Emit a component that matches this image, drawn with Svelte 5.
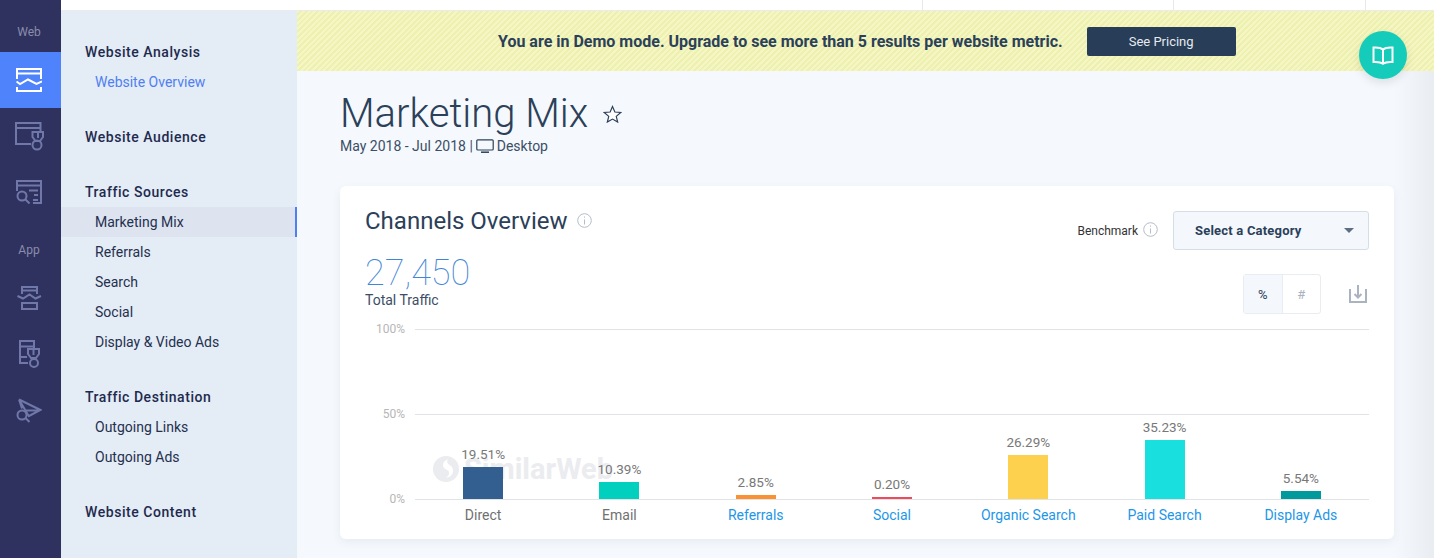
<script>
  const groups = [
    { title: 'Website Analysis', items: [{ label: 'Website Overview', link: true }] },
    { title: 'Website Audience', items: [] },
    { title: 'Traffic Sources', items: [{ label: 'Marketing Mix', active: true }, { label: 'Referrals' }, { label: 'Search' }, { label: 'Social' }, { label: 'Display & Video Ads' }] },
    { title: 'Traffic Destination', items: [{ label: 'Outgoing Links' }, { label: 'Outgoing Ads' }] },
    { title: 'Website Content', items: [] }
  ];
  const bars = [
    { name: 'Direct', value: '19.51%', h: 32, color: '#325f8f' },
    { name: 'Email', value: '10.39%', h: 17, color: '#00d0bd' },
    { name: 'Referrals', value: '2.85%', h: 4, color: '#fa9133', link: true },
    { name: 'Social', value: '0.20%', h: 2, color: '#ef4a5c', link: true },
    { name: 'Organic Search', value: '26.29%', h: 44, color: '#fdd04d', link: true },
    { name: 'Paid Search', value: '35.23%', h: 59, color: '#1adfdf', link: true },
    { name: 'Display Ads', value: '5.54%', h: 8, color: '#009a9c', link: true }
  ];
</script>

<div class="page">
  <aside class="rail">
    <div class="rail-label web">Web</div>
    <div class="rail-item on">
      <svg width="26" height="24" viewBox="0 0 26 24" fill="none" stroke="#fff" stroke-width="2"><path d="M1 11V1h24v10M1 5.500h24M.5 13.500 4 16l8-4.500 8.500 4.500 5.500-2.500M1 19v4h24v-4M5 23h16"/></svg>
    </div>
    <div class="rail-item">
      <svg width="29" height="29" viewBox="0 0 29 29" fill="none" stroke="#6f78a8" stroke-width="2"><path d="M16 22H1V1h24.500v8M1 6h24.500"/><path d="M17.500 10H28v5l-3 4h-4.500l-3-4zM23 10v6"/><circle cx="22" cy="23" r="4.500"/></svg>
    </div>
    <div class="rail-item">
      <svg width="26" height="25" viewBox="0 0 26 25" fill="none" stroke="#6f78a8" stroke-width="2"><path d="M1 11V1h24v22h-8M1 5.500h24M13 10.500h9M18 15h4M17 20h5"/><circle cx="6" cy="16" r="4.500"/><path d="m9.500 19.500 4 4"/></svg>
    </div>
    <div class="rail-label app">App</div>
    <div class="rail-item first">
      <svg width="25" height="24" viewBox="0 0 25 24" fill="none" stroke="#6f78a8" stroke-width="2"><path d="M5 8V1h15v7M5 4.500h15M.5 10l5.500 2.500 6.500-4 6 4 5.500-2.500M5 17h15v6H5z"/></svg>
    </div>
    <div class="rail-item">
      <svg width="21" height="28" viewBox="0 0 21 28" fill="none" stroke="#6f78a8" stroke-width="2"><path d="M9 23H1V1h14v7M1 6.500h14M1 17h7"/><path d="M9 9h11v5l-3 4h-5l-3-4zM14.500 9v6"/><circle cx="15" cy="23" r="4"/></svg>
    </div>
    <div class="rail-item">
      <svg width="26" height="25" viewBox="0 0 26 25" fill="none" stroke="#6f78a8" stroke-width="2"><path d="M3 1.500 24.500 12 12 18.500M3 1.500l3 9M3 1.500l10 17M9 12.500h15"/><circle cx="6" cy="17" r="4.500"/><path d="m9.500 20 4 4"/></svg>
    </div>
  </aside>

  <div class="right">
    <div class="topbar">
      <span class="tick t1"></span><span class="tick t2"></span><span class="tick t3"></span>
    </div>
    <div class="body">
      <nav class="nav">
        {#each groups as g}
          <section class="group">
            <h3>{g.title}</h3>
            {#each g.items as it}
              <div class="item" class:active={it.active} class:link={it.link}>{it.label}</div>
            {/each}
          </section>
        {/each}
      </nav>

      <main class="main">
        <div class="banner">
          <strong>You are in Demo mode. Upgrade to see more than 5 results per website metric.</strong>
          <button class="pricing">See Pricing</button>
        </div>
        <div class="fab">
          <svg width="22" height="19" viewBox="0 0 22 19" fill="none" stroke="#fff" stroke-width="2"><path d="M11 3.500C9 1.800 5.500 1.200 1.500 1.500V16c4-.3 7.500.2 9.500 1.800 2-1.600 5.500-2.100 9.500-1.800V1.500C16.500 1.200 13 1.800 11 3.500zM11 3.500v14"/></svg>
        </div>
        <div class="edge"></div>

        <div class="content">
          <div class="head">
            <h1>Marketing Mix</h1>
            <svg class="star" width="19" height="18" viewBox="0 0 24 23" fill="#fff" stroke="#2b4059" stroke-width="1.500"><path d="M12 2l3 7 7.500.6-5.700 4.900 1.800 7.300L12 18l-6.600 3.800 1.800-7.300L1.500 9.600 9 9z"/></svg>
          </div>
          <div class="sub">May 2018 - Jul 2018 | <svg class="desk" width="18" height="14" viewBox="0 0 18 14" fill="none" stroke="#2b4059" stroke-width="1.200"><rect x=".8" y=".8" width="16.400" height="10.200" rx="1"/><path d="M5 13.200h8" stroke-width="1.500"/></svg> Desktop</div>

          <section class="card">
            <div class="card-top">
              <div>
                <div class="ctitle">Channels Overview <svg class="info" width="15" height="15" viewBox="0 0 15 15" fill="none" stroke="#b4bdc9"><circle cx="7.500" cy="7.500" r="6.800"/><path d="M7.500 6.500V11.500M7.500 3.500v1.200"/></svg></div>
                <div class="total">27,450</div>
                <div class="total-label">Total Traffic</div>
              </div>
              <div class="tools">
                <div class="bench">
                  <span>Benchmark</span>
                  <svg width="15" height="15" viewBox="0 0 15 15" fill="none" stroke="#b4bdc9"><circle cx="7.500" cy="7.500" r="6.800"/><path d="M7.500 6.500V11.500M7.500 3.500v1.200"/></svg>
                  <div class="select"><span>Select a Category</span><i class="caret"></i></div>
                </div>
                <div class="actions">
                  <div class="toggle"><span class="sel">%</span><span>#</span></div>
                  <svg width="18" height="18" viewBox="0 0 18 18" fill="none" stroke="#aab4c1" stroke-width="2"><path d="M1 4v13h16V4"/><path d="M9 0v12M5.500 9 9 12.500 12.500 9"/></svg>
                </div>
              </div>
            </div>

            <div class="chart">
              <div class="row"><span class="tick-label">100%</span><div class="line"></div></div>
              <div class="row"><span class="tick-label">50%</span><div class="line"></div></div>
              <div class="row zero"><span class="tick-label">0%</span><div class="line"></div></div>
              <div class="mark">
                <svg width="26" height="26" viewBox="0 0 26 26"><circle cx="13" cy="13" r="13" fill="#ebecef"/><path d="M15 3C8 6 9 12 14 14c3 1 3 5-1 8 7-1 9-8 5-12-3-2-5-4-3-7z" fill="#fff"/></svg>
                <span>SimilarWeb</span>
              </div>
              <div class="plot">
                {#each bars as b}
                  <div class="col">
                    <span class="val">{b.value}</span>
                    <div class="bar" style="height:{b.h}px;background:{b.color}"></div>
                  </div>
                {/each}
              </div>
            </div>
            <div class="cats">
              {#each bars as b}
                <span class:clink={b.link}>{b.name}</span>
              {/each}
            </div>
          </section>
        </div>
      </main>
    </div>
  </div>
</div>

<style>
  :global(body) { margin: 0; }
  .page { display: flex; width: 1434px; height: 558px; overflow: hidden; font-family: Roboto, "Liberation Sans", sans-serif; color: #2b4059; }

  .rail { width: 61px; flex: none; background: #2f325f; display: flex; flex-direction: column; align-items: stretch; }
  .rail-label { text-align: center; font-size: 12px; line-height: 16px; color: #8a8dab; padding-right: 3px; }
  .rail-label.web { padding-top: 24px; height: 28px; }
  .rail-label.app { padding-top: 22px; height: 16px; margin-bottom: 12px; }
  .rail-item { height: 56px; flex: none; display: flex; align-items: center; justify-content: center; padding-right: 3px; }
  .rail-item.on { background: #4f83fb; }

  .right { flex: 1; min-width: 0; display: flex; flex-direction: column; }
  .topbar { height: 10px; flex: none; background: #fff; border-bottom: 1px solid #e9ecef; position: relative; }
  .tick { position: absolute; top: 0; bottom: 0; width: 1px; background: #e6e8ec; }
  .t1 { left: 861px; } .t2 { left: 1112px; } .t3 { left: 1304px; }
  .body { flex: 1; min-height: 0; display: flex; }

  .nav { width: 236px; flex: none; background: #e4ecf5; padding-top: 26px; box-sizing: border-box; }
  .group { margin-bottom: 25px; }
  h3 { margin: 0; padding-left: 24px; height: 30px; line-height: 30px; font-size: 14px; font-weight: 500; letter-spacing: .55px; color: #1e2a4e; }
  .item { height: 30px; line-height: 30px; padding-left: 34px; font-size: 14px; color: #25304f; box-sizing: border-box; }
  .item.link { color: #4f7ff0; }
  .item.active { background: #dde4ef; border-right: 2px solid #4f7ff0; }

  .main { flex: 1; min-width: 0; background: #f5f9fd; position: relative; }
  .banner { height: 60px; display: flex; align-items: center; padding-left: 201px; background: repeating-linear-gradient(135deg, #f4f6c4 0 2px, #edf0ae 2px 4px); }
  .banner strong { font-size: 16px; font-weight: 700; color: #2b4059; white-space: nowrap; }
  .pricing { margin-left: 24px; width: 149px; height: 29px; border: 0; border-radius: 2px; background: #283d57; color: #e6eaef; font: 400 13px Roboto, sans-serif; padding: 0; }
  .fab { position: absolute; left: 1062px; top: 20px; width: 48px; height: 48px; border-radius: 50%; background: #14ccb9; box-shadow: 0 4px 10px rgba(0,0,0,.1); display: flex; align-items: center; justify-content: center; z-index: 3; }
  .edge { position: absolute; right: 0; top: 60px; bottom: 0; width: 40px; background: linear-gradient(90deg, #f5f9fd, #e9edf2); }

  .content { padding: 0 40px 0 43px; position: relative; }
  .head { display: flex; align-items: center; margin-top: 19px; height: 47px; }
  h1 { margin: 0; font-size: 40px; font-weight: 300; line-height: 47px; color: #2b4059; }
  .star { margin-left: 15px; }
  .sub { font-size: 14px; line-height: 18px; color: #3b4e66; white-space: nowrap; }
  .desk { vertical-align: -2px; margin-right: -1px; }

  .card { margin-top: 31px; height: 353px; box-sizing: border-box; background: #fff; border-radius: 6px; box-shadow: 0 3px 8px rgba(60,80,120,.08); padding: 25px 25px 0; position: relative; }
  .card-top { display: flex; justify-content: space-between; height: 118px; }
  .ctitle { font-size: 24px; line-height: 20px; color: #2b4059; white-space: nowrap; }
  .info { margin-left: 3px; vertical-align: 1px; }
  .total { font-size: 36px; font-weight: 100; line-height: 40px; margin-top: 22px; color: #3f86d6; }
  .total-label { font-size: 14px; line-height: 15px; color: #3b4e66; }
  .tools { display: flex; flex-direction: column; align-items: flex-end; }
  .bench { display: flex; align-items: center; font-size: 12px; color: #333; }
  .bench svg { margin: 0 0 2px 5px; }
  .select { margin-left: 15px; width: 196px; height: 39px; box-sizing: border-box; border: 1px solid #d5dde7; border-radius: 3px; background: #f4f8fc; display: flex; align-items: center; justify-content: space-between; padding: 0 14px 0 21px; font-size: 13px; font-weight: 700; letter-spacing: .2px; color: #2b4059; }
  .caret { width: 0; height: 0; border-left: 5px solid transparent; border-right: 5px solid transparent; border-top: 5px solid #5d6e84; }
  .actions { display: flex; align-items: center; margin-top: 24px; padding-right: 2px; gap: 28px; }
  .toggle { display: flex; width: 78px; height: 40px; box-sizing: border-box; border: 1px solid #e9ecf0; border-radius: 3px; font-size: 13px; }
  .toggle span { flex: 1; display: flex; align-items: center; justify-content: center; color: #a9b2bd; }
  .toggle .sel { background: #f4f8fc; color: #2b4059; border-right: 1px solid #e9ecf0; }

  .chart { position: relative; height: 171px; }
  .row { display: flex; align-items: flex-start; height: 85px; }
  .row.zero { height: 1px; }
  .tick-label { width: 40px; text-align: right; font-size: 12px; line-height: 14px; margin-top: -7px; color: #b6b6b6; }
  .line { flex: 1; height: 1px; margin-left: 10px; background: #e2e3e6; }
  .mark { position: absolute; left: 68px; top: 125px; display: flex; align-items: center; gap: 5px; font-size: 29px; font-weight: 700; line-height: 30px; color: #ebecef; }
  .plot { position: absolute; left: 50px; right: 0; bottom: 1px; display: grid; grid-template-columns: repeat(7, 1fr); align-items: end; }
  .col { display: flex; flex-direction: column; align-items: center; }
  .val { font-size: 13.500px; line-height: 16px; color: #787878; margin-bottom: 5px; }
  .bar { width: 40px; }
  .cats { margin-left: 50px; display: grid; grid-template-columns: repeat(7, 1fr); margin-top: 7px; font-size: 14px; line-height: 16px; text-align: center; color: #707070; }
  .clink { color: #1e96e8; }
</style>
